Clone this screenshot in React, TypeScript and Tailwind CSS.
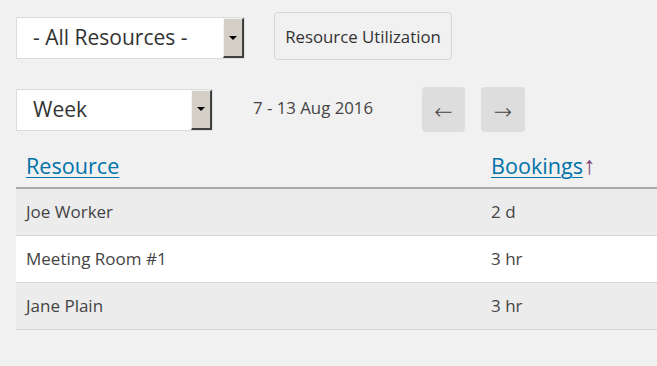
const rows = [
  { name: 'Joe Worker', bookings: '2 d' },
  { name: 'Meeting Room #1', bookings: '3 hr' },
  { name: 'Jane Plain', bookings: '3 hr' },
];

function FakeSelect({ label, width }: { label: string; width: string }) {
  return (
    <div className={`flex h-[42px] ${width} border border-[#dcdcdc] bg-white`}>
      <div className="flex-1 flex items-center pl-[16px] text-[21px] text-[#333]">{label}</div>
      <div className="w-[21px] h-full flex items-center justify-center bg-[#d4d0c8] border-t border-l border-t-[#f4f4f4] border-l-[#f4f4f4] border-r-2 border-b-2 border-r-[#404040] border-b-[#404040]">
        <div className="w-0 h-0 border-l-[4px] border-r-[4px] border-t-[4px] border-l-transparent border-r-transparent border-t-black" />
      </div>
    </div>
  );
}

export default function App() {
  return (
    <div className="min-h-[366px] bg-[#f1f1f1] text-[#333] font-['Open_Sans',sans-serif] pl-[16px]">
      <div className="flex items-start pt-[12px]">
        <div className="mt-[5px]">
          <FakeSelect label="- All Resources -" width="w-[229px]" />
        </div>
        <button className="ml-[29px] w-[178px] h-[48px] pt-[1px] border border-[#d6d6d6] rounded-[4px] bg-[#f1f1f1] text-[16.8px] text-[#333]">
          Resource Utilization
        </button>
      </div>
      <div className="flex items-center mt-[27px]">
        <FakeSelect label="Week" width="w-[197px]" />
        <span className="ml-[40px] w-[169px] text-[16.8px] text-[#444] mb-[3px]">7 - 13 Aug 2016</span>
        <button className="w-[43px] h-[45px] pt-[5px] rounded-[4px] bg-[#dddddd] text-[22px] leading-none text-[#444] font-['DejaVu_Sans',sans-serif] font-extralight">←</button>
        <button className="ml-[16px] w-[44px] h-[45px] pt-[5px] rounded-[4px] bg-[#dddddd] text-[22px] leading-none text-[#444] font-['DejaVu_Sans',sans-serif] font-extralight">→</button>
      </div>
      <table className="mt-[16px] w-[650px] border-collapse">
        <thead>
          <tr className="border-b-2 border-[#aaa]">
            <th className="w-[465px] text-left font-normal pl-[10px] pt-[2px] pb-[5px] text-[21.6px]">
              <a href="#" className="text-[#0073aa] underline underline-offset-[3px] decoration-1">Resource</a>
            </th>
            <th className="text-left font-normal pl-[10px] pt-[2px] pb-[5px] text-[21.6px]">
              <a href="#" className="text-[#0073aa] underline underline-offset-[3px] decoration-1">Bookings</a>
              <span className="text-[#7a3e74] text-[25px] leading-none font-['Liberation_Sans',sans-serif]">↑</span>
            </th>
          </tr>
        </thead>
        <tbody>
          {rows.map((r, i) => (
            <tr key={r.name} className={`h-[47px] border-b border-[#d6d6d6] ${i % 2 === 0 ? 'bg-[#ececec]' : 'bg-white'}`}>
              <td className="pl-[10px] text-[17px] text-[#444]">{r.name}</td>
              <td className="pl-[10px] text-[17px] text-[#444]">{r.bookings}</td>
            </tr>
          ))}
        </tbody>
      </table>
    </div>
  );
}
